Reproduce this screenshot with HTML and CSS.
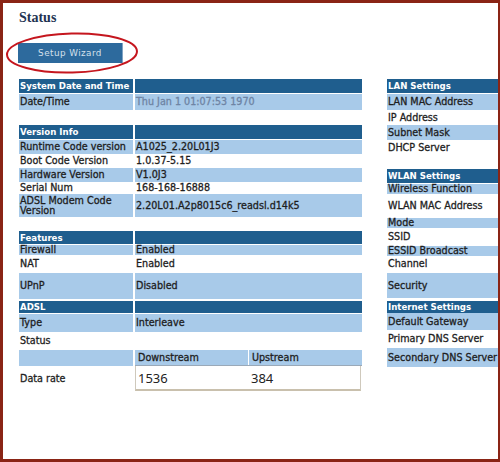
FILE: index.html
```html
<!DOCTYPE html>
<html>
<head>
<meta charset="utf-8">
<title>Status</title>
<link rel="stylesheet" href="styles.css">
</head>
<body>
<div class="frame">
  <h1 class="title">Status</h1>
  <div class="wizard-wrap">
    <button class="wizard">Setup Wizard</button>
    <svg class="ring" viewBox="0 0 136 46" width="136" height="46">
      <ellipse cx="67" cy="22" rx="65" ry="19.5" transform="rotate(-1.5 67 22)" fill="none" stroke="#c5161e" stroke-width="2"/>
    </svg>
  </div>

  <div class="panels">
    <div class="tbl left">
      <div class="row hd h14 sep"><div class="c">System Date and Time</div><div class="c"></div></div>
      <div class="row lb h16"><div class="c">Date/Time</div><div class="c dim">Thu Jan 1 01:07:53 1970</div></div>
      <div class="row h15"></div>
      <div class="row hd h14 sep"><div class="c">Version Info</div><div class="c"></div></div>
      <div class="row lb h14"><div class="c">Runtime Code version</div><div class="c">A1025_2.20L01J3</div></div>
      <div class="row h14"><div class="c">Boot Code Version</div><div class="c">1.0.37-5.15</div></div>
      <div class="row lb h14"><div class="c">Hardware Version</div><div class="c">V1.0J3</div></div>
      <div class="row h12"><div class="c">Serial Num</div><div class="c">168-168-16888</div></div>
      <div class="row lb h23"><div class="c">ADSL Modem Code Version</div><div class="c">2.20L01.A2p8015c6_readsl.d14k5</div></div>
      <div class="row h14"></div>
      <div class="row hd h13 sep"><div class="c">Features</div><div class="c"></div></div>
      <div class="row lb h10"><div class="c">Firewall</div><div class="c">Enabled</div></div>
      <div class="row h18"><div class="c">NAT</div><div class="c">Enabled</div></div>
      <div class="row lb h26"><div class="c">UPnP</div><div class="c">Disabled</div></div>
      <div class="row h2"></div>
      <div class="row hd h12 sep"><div class="c">ADSL</div><div class="c"></div></div>
      <div class="row lb h18"><div class="c">Type</div><div class="c">Interleave</div></div>
      <div class="row h18"><div class="c">Status</div><div class="c"></div></div>
      <div class="row h16 rate-head">
        <div class="c fill"></div>
        <div class="sub">
          <div class="sc">Downstream</div>
          <div class="sc">Upstream</div>
        </div>
      </div>
      <div class="row h25">
        <div class="c">Data rate</div>
        <div class="subval">
          <div class="sv">1536</div>
          <div class="sv">384</div>
        </div>
      </div>
    </div>

    <div class="tbl right">
      <div class="row hd h14 sep"><div class="c">LAN Settings</div></div>
      <div class="row lb h16"><div class="c">LAN MAC Address</div></div>
      <div class="row h15"><div class="c">IP Address</div></div>
      <div class="row lb h15"><div class="c">Subnet Mask</div></div>
      <div class="row h15"><div class="c">DHCP Server</div></div>
      <div class="row h14"></div>
      <div class="row hd h14 sep"><div class="c">WLAN Settings</div></div>
      <div class="row lb h10"><div class="c">Wireless Function</div></div>
      <div class="row h24"><div class="c">WLAN MAC Address</div></div>
      <div class="row lb h10"><div class="c">Mode</div></div>
      <div class="row h18"><div class="c">SSID</div></div>
      <div class="row lb h9"><div class="c">ESSID Broadcast</div></div>
      <div class="row h18"><div class="c">Channel</div></div>
      <div class="row lb h25"><div class="c">Security</div></div>
      <div class="row h3"></div>
      <div class="row hd h12"><div class="c">Internet Settings</div></div>
      <div class="row lb h17"><div class="c">Default Gateway</div></div>
      <div class="row h18"><div class="c">Primary DNS Server</div></div>
      <div class="row lb h19"><div class="c">Secondary DNS Server</div></div>
    </div>
  </div>
</div>
</body>
</html>
```

FILE: styles.css
```css
* {
  box-sizing: border-box;
  margin: 0;
  padding: 0;
}

html, body {
  width: 500px;
  height: 462px;
  overflow: hidden;
  background: #fff;
}

.frame {
  width: 500px;
  height: 462px;
  border: 3px solid #8a2415;
  border-right-width: 2px;
  padding: 7px 0 0 16px;
  font-family: "DejaVu Sans", Verdana, sans-serif;
  font-size: 9.6px;
  color: #1e1e1e;
  background: #fff;
}

.title {
  font-family: "Liberation Serif", "Times New Roman", serif;
  font-weight: bold;
  font-size: 14px;
  line-height: 16px;
  color: #233352;
}

.wizard-wrap {
  position: relative;
  width: 105px;
  height: 20px;
  margin: 17px 0 0 -1px;
}

.wizard {
  display: block;
  width: 105px;
  height: 20px;
  background: #2d6a9d;
  border: 0;
  border-right: 1px solid #7fa3c4;
  color: #d5e0eb;
  font-family: "DejaVu Sans", Verdana, sans-serif;
  font-size: 8.8px;
  letter-spacing: 0.45px;
}

.ring {
  position: absolute;
  left: -13px;
  top: -12px;
  overflow: visible;
}

.panels {
  display: flex;
  gap: 25px;
  margin-top: 16px;
}

.left {
  width: 343px;
}

.right {
  width: 111px;
}

.row {
  display: grid;
  grid-template-columns: 114px 227px;
  column-gap: 2px;
}

.right .row {
  grid-template-columns: 111px;
}

.c {
  display: flex;
  align-items: center;
  padding-left: 1px;
  line-height: 10px;
  -webkit-text-stroke: 0.3px currentColor;
}

.right .c {
  white-space: nowrap;
}

.lb .c {
  background: #a8cae9;
}

.hd .c {
  background: #1f5e8e;
  color: #fff;
  font-weight: bold;
  font-size: 8.6px;
  -webkit-text-stroke: 0;
}

.sep {
  margin-bottom: 1px;
}

.dim {
  color: #6e84a4;
}

.h2 { height: 2px; }
.h3 { height: 3px; }
.h9 { height: 9px; }
.h10 { height: 10px; }
.h12 { height: 12px; }
.h13 { height: 13px; }
.h14 { height: 14px; }
.h15 { height: 15px; }
.h16 { height: 16px; }
.h17 { height: 17px; }
.h18 { height: 18px; }
.h19 { height: 19px; }
.h23 { height: 23px; }
.h24 { height: 24px; }
.h25 { height: 25px; }
.h26 { height: 26px; }

.rate-head .fill {
  background: #a8cae9;
}

.sub {
  display: grid;
  grid-template-columns: 113px 113px;
  column-gap: 1px;
  width: 227px;
  border-bottom: 1px solid #9aa9b8;
}

.sc {
  display: flex;
  align-items: center;
  padding-left: 3px;
  background: #a8cae9;
  -webkit-text-stroke: 0.3px currentColor;
}

.subval {
  display: grid;
  grid-template-columns: 113px 112px;
  width: 226px;
  border-left: 1px solid #cfc9bc;
  border-right: 1px solid #cfc9bc;
  border-bottom: 2px solid #c9c0ad;
  background: #fff;
}

.sv {
  display: flex;
  align-items: center;
  padding-left: 2px;
  font-family: "Noto Sans", "Open Sans", sans-serif;
  font-size: 13px;
  color: #222;
}
```
